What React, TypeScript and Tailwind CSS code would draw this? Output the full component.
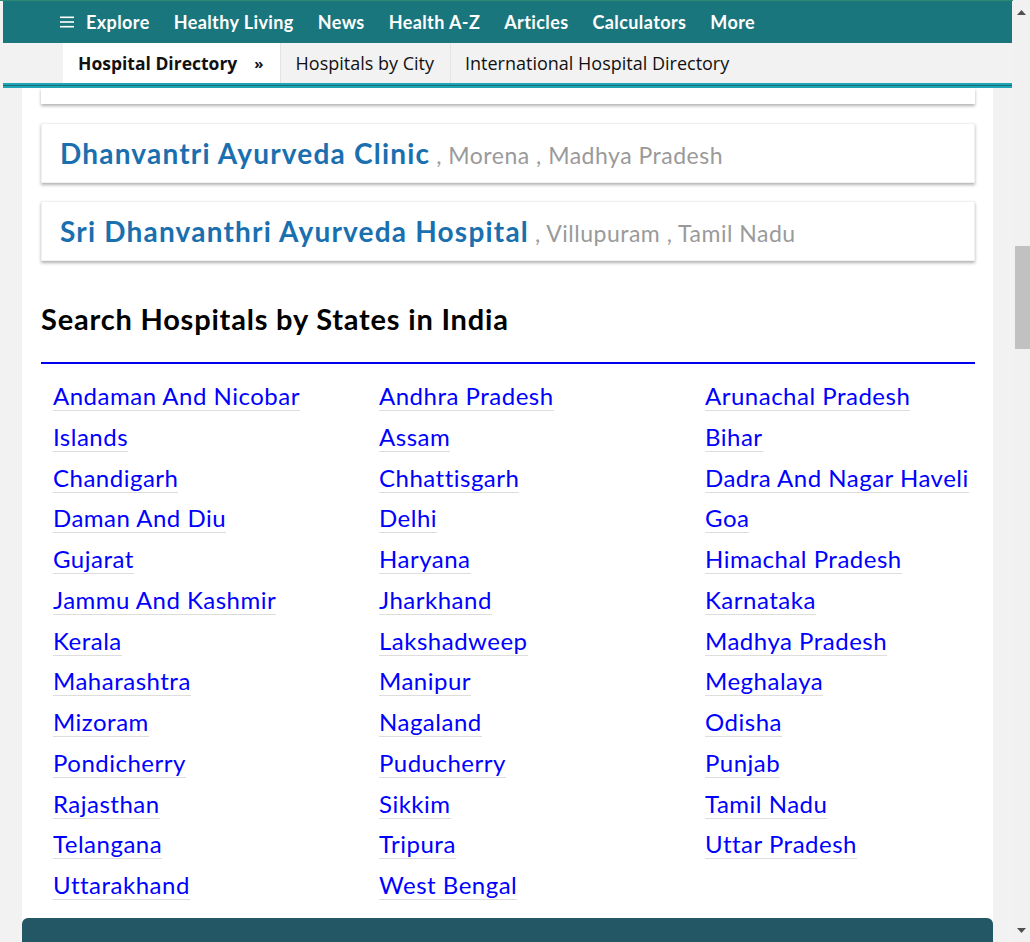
import React from 'react';

const navItems = ['Healthy Living', 'News', 'Health A-Z', 'Articles', 'Calculators', 'More'];

const hospitals = [
  { name: 'Dhanvantri Ayurveda Clinic', city: 'Morena', state: 'Madhya Pradesh' },
  { name: 'Sri Dhanvanthri Ayurveda Hospital', city: 'Villupuram', state: 'Tamil Nadu' },
];

const states = [
  'Andaman And Nicobar', 'Andhra Pradesh', 'Arunachal Pradesh',
  'Islands', 'Assam', 'Bihar',
  'Chandigarh', 'Chhattisgarh', 'Dadra And Nagar Haveli',
  'Daman And Diu', 'Delhi', 'Goa',
  'Gujarat', 'Haryana', 'Himachal Pradesh',
  'Jammu And Kashmir', 'Jharkhand', 'Karnataka',
  'Kerala', 'Lakshadweep', 'Madhya Pradesh',
  'Maharashtra', 'Manipur', 'Meghalaya',
  'Mizoram', 'Nagaland', 'Odisha',
  'Pondicherry', 'Puducherry', 'Punjab',
  'Rajasthan', 'Sikkim', 'Tamil Nadu',
  'Telangana', 'Tripura', 'Uttar Pradesh',
  'Uttarakhand', 'West Bengal',
];

function Header() {
  return (
    <div className="pl-[3px] pr-px">
      <div className="flex h-[42px] items-center gap-6 bg-[#1a767d] pl-[57px] text-[18px] font-bold tracking-[0.4px] text-white">
        <span className="flex items-center gap-[12px]">
          <svg width="14" height="12" viewBox="0 0 14 12">
            <rect x="0" y="0.5" width="14" height="1.6" fill="#fff" />
            <rect x="0" y="5.2" width="14" height="1.6" fill="#fff" />
            <rect x="0" y="9.9" width="14" height="1.6" fill="#fff" />
          </svg>
          Explore
        </span>
        {navItems.map((item) => (
          <span key={item}>{item}</span>
        ))}
      </div>
      <div className="flex h-10 bg-[#f2f2f2] pl-[60px] text-[18px] text-[#111]" style={{ fontFamily: '"Open Sans", sans-serif' }}>
        <div className="flex items-center gap-[17px] bg-white pl-[15px] pr-[16px] text-[17.5px] font-bold">
          Hospital Directory <span className="text-[15px]">»</span>
        </div>
        <div className="flex items-center border-l border-[#e4e4e4] pl-[15px] pr-[16px]">Hospitals by City</div>
        <div className="flex items-center border-l border-[#e4e4e4] px-[14px]">International Hospital Directory</div>
      </div>
      <div className="h-[5px] border-y-2 border-[#1fa6b6] bg-[#1b6c78]" />
    </div>
  );
}

function Scrollbar() {
  return (
    <div className="flex w-[17px] shrink-0 flex-col bg-[#f1f1f1]">
      <div className="flex h-[17px] items-end justify-center pb-[2px]">
        <svg width="9" height="5" viewBox="0 0 9 5"><path d="M0 5 L4.5 0 L9 5 Z" fill="#505050" /></svg>
      </div>
      <div className="mt-[229px] ml-[2px] h-[103px] bg-[#c1c1c1]" />
      <div className="flex-1" />
      <div className="flex h-[17px] items-start justify-center pt-[3px]">
        <svg width="9" height="5" viewBox="0 0 9 5"><path d="M0 0 L4.5 5 L9 0 Z" fill="#505050" /></svg>
      </div>
    </div>
  );
}

export default function App() {
  return (
    <div className="flex h-[942px] overflow-hidden bg-[#f2f2f2]" style={{ fontFamily: 'Lato, sans-serif' }}>
      <div className="flex min-w-0 flex-1 flex-col">
        <div className="h-px bg-[#2e8a70]" />
        <Header />
        <div className="ml-[22px] mr-[20px] flex min-w-0 flex-1 flex-col bg-white">
          <div className="pl-[19px] pr-[18px]">
            <div className="h-[16px] bg-white shadow-[0_2px_3px_rgba(0,0,0,0.3)]" />
            <div className="mt-[19px] flex flex-col gap-[18px]">
              {hospitals.map((h) => (
                <div key={h.name} className="flex h-[60px] items-center border border-[#f0f0f0] bg-white pl-[18px] shadow-[0_2px_3px_rgba(0,0,0,0.3)]">
                  <p className="whitespace-nowrap leading-none">
                    <span className="text-[28px] font-bold tracking-[1.2px] text-[#1a6faf]">{h.name}</span>
                    <span className="ml-[6px] text-[23px] tracking-[0.5px] text-[#9a9a9a]">, {h.city} , {h.state}</span>
                  </p>
                </div>
              ))}
            </div>
            <h2 className="mt-[40px] text-[29px] font-bold leading-[36px] tracking-[0.8px] text-black">Search Hospitals by States in India</h2>
            <div className="mt-[25px] h-[2px] bg-[#0000ee]" />
            <div className="grid grid-cols-[326px_326px_270px] gap-y-[10.75px] pl-[12px] pt-[17px]">
              {states.map((s) => (
                <div key={s} className="whitespace-nowrap">
                  <a className="inline-block border-b border-[#dddddd] text-[24px] leading-[29px] tracking-[0.5px] text-[#0000ff]">{s}</a>
                </div>
              ))}
            </div>
          </div>
          <div className="flex-1" />
          <div className="h-[24px] rounded-t-md bg-[#235766]" />
        </div>
      </div>
      <Scrollbar />
    </div>
  );
}
